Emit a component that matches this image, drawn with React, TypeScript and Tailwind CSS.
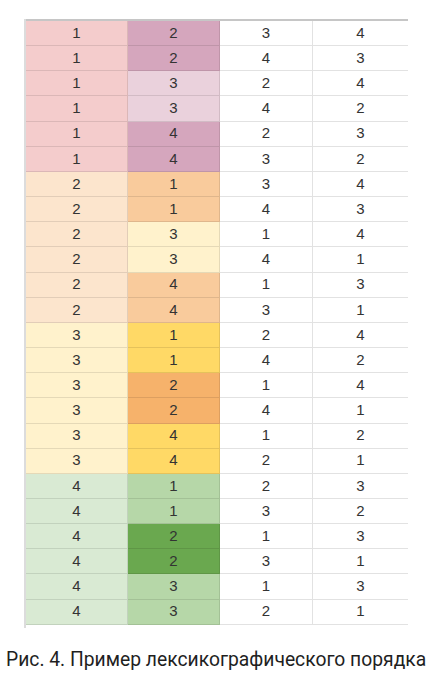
import React from "react";

const rows: number[][] = [
  [1, 2, 3, 4],
  [1, 2, 4, 3],
  [1, 3, 2, 4],
  [1, 3, 4, 2],
  [1, 4, 2, 3],
  [1, 4, 3, 2],
  [2, 1, 3, 4],
  [2, 1, 4, 3],
  [2, 3, 1, 4],
  [2, 3, 4, 1],
  [2, 4, 1, 3],
  [2, 4, 3, 1],
  [3, 1, 2, 4],
  [3, 1, 4, 2],
  [3, 2, 1, 4],
  [3, 2, 4, 1],
  [3, 4, 1, 2],
  [3, 4, 2, 1],
  [4, 1, 2, 3],
  [4, 1, 3, 2],
  [4, 2, 1, 3],
  [4, 2, 3, 1],
  [4, 3, 1, 3],
  [4, 3, 2, 1],
];

const col1Bg: Record<number, string> = {
  1: "bg-[#f4cccc]",
  2: "bg-[#fce5cd]",
  3: "bg-[#fff2cc]",
  4: "bg-[#d9ead3]",
};

const col2Bg: Record<string, string> = {
  "1-2": "bg-[#d5a6bd]",
  "1-3": "bg-[#ead1dc]",
  "1-4": "bg-[#d5a6bd]",
  "2-1": "bg-[#f9cb9c]",
  "2-3": "bg-[#fff2cc]",
  "2-4": "bg-[#f9cb9c]",
  "3-1": "bg-[#ffd966]",
  "3-2": "bg-[#f6b26b]",
  "3-4": "bg-[#ffd966]",
  "4-1": "bg-[#b6d7a8]",
  "4-2": "bg-[#6aa84f]",
  "4-3": "bg-[#b6d7a8]",
};

export default function App() {
  return (
    <div className="w-[436px] h-[679px] bg-white relative" style={{ fontFamily: "'Liberation Sans', Arial, sans-serif" }}>
      <div className="pt-[19px] pl-[24px]">
        <div className="w-[384px] border-l-2 border-[#dcdcdc] pb-[3px]">
          <div className="border-t-2 border-[#c6c6c6]">
            {rows.map((r, i) => (
              <div
                key={i}
                className="grid grid-cols-[102px_92px_93px_95px] h-[25.17px] text-[15px] text-[#333333]"
              >
                <div className={`${col1Bg[r[0]]} flex items-center justify-center border-b border-r border-black/10`}>{r[0]}</div>
                <div className={`${col2Bg[r[0] + "-" + r[1]]} flex items-center justify-center border-b border-r border-black/10`}>{r[1]}</div>
                <div className="bg-white flex items-center justify-center border-b border-r border-[#e2e2e2]">{r[2]}</div>
                <div className="bg-white flex items-center justify-center border-b border-[#e2e2e2]">{r[3]}</div>
              </div>
            ))}
          </div>
        </div>
      </div>
      <div
        className="mt-[19px] pl-[6px] text-[19.3px] leading-[25px] text-[#1f1f1f] whitespace-nowrap"
        style={{ fontFamily: "Roboto, 'Noto Sans', sans-serif" }}
      >
        Рис. 4. Пример лексикографического порядка
      </div>
    </div>
  );
}
